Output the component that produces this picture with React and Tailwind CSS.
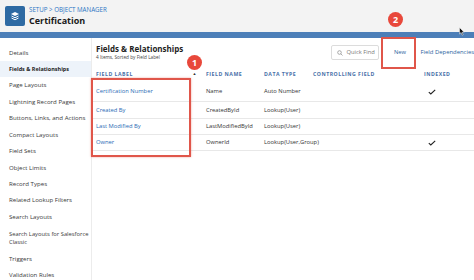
import React from 'react';

const sideItems = [
  'Details',
  'Fields & Relationships',
  'Page Layouts',
  'Lightning Record Pages',
  'Buttons, Links, and Actions',
  'Compact Layouts',
  'Field Sets',
  'Object Limits',
  'Record Types',
  'Related Lookup Filters',
  'Search Layouts',
  'Search Layouts for Salesforce Classic',
  'Triggers',
  'Validation Rules',
];

const rows = [
  { label: 'Certification Number', name: 'Name', type: 'Auto Number', indexed: true, h: 'h-[20px]' },
  { label: 'Created By', name: 'CreatedById', type: 'Lookup(User)', indexed: false, h: 'h-[17px]' },
  { label: 'Last Modified By', name: 'LastModifiedById', type: 'Lookup(User)', indexed: false, h: 'h-[16px]' },
  { label: 'Owner', name: 'OwnerId', type: 'Lookup(User,Group)', indexed: true, h: 'h-[16px]' },
];

const Badge = ({ n, className }) => (
  <div className={`absolute w-[15px] h-[15px] rounded-full bg-[#e8483b] text-white text-[9px] font-bold flex items-center justify-center ${className}`}>
    {n}
  </div>
);

const Check = () => (
  <svg width="8" height="6" viewBox="0 0 8 6">
    <path d="M0.8 3.2 L2.8 5 L7.2 0.8" fill="none" stroke="#222" strokeWidth="1.1" />
  </svg>
);

const App = () => {
  return (
    <div className="relative w-[474px] h-[280px] overflow-hidden bg-white" style={{ fontFamily: '"Open Sans", Lato, sans-serif' }}>
      {/* header */}
      <div className="h-[32px] bg-[#f3f3f3] flex items-center pl-[5px] gap-[4px]">
        <div className="w-[20px] h-[20px] rounded-[2px] bg-[#2e6aa3] flex items-center justify-center">
          <svg width="10" height="10" viewBox="0 0 10 10">
            <path d="M5 1 L9 3 L5 5 L1 3 Z" fill="#fff" />
            <path d="M1.5 5 L5 6.8 L8.5 5" fill="none" stroke="#fff" strokeWidth="1" />
            <path d="M1.5 7 L5 8.8 L8.5 7" fill="none" stroke="#fff" strokeWidth="1" />
          </svg>
        </div>
        <div className="flex flex-col leading-none">
          <div className="text-[6.2px] text-[#2b74c4]">SETUP &gt; OBJECT MANAGER</div>
          <div className="text-[9px] font-bold text-[#1a1a1a] mt-[2px]">Certification</div>
        </div>
      </div>
      <div className="h-[6px] bg-[#4d7fb8]" />

      <div className="flex h-[242px]">
        {/* sidebar */}
        <div className="w-[92px] shrink-0 border-r border-[#ececec] pt-[8px] flex flex-col">
          {sideItems.map((s, i) => (
            <div
              key={s}
              className={`shrink-0 pl-[9px] leading-[8.5px] flex items-center ${
                i === 0 ? 'h-[15px]' : i === 11 ? 'h-[25.5px]' : 'h-[16.44px]'
              } ${i === 1 ? 'bg-[#edf3fa] font-bold text-[#1c1c1c] text-[5.5px]' : 'text-[#3a3a3a] text-[6.1px]'}`}
            >
              {i === 11 ? (
                <span className="whitespace-nowrap text-[5.8px]">
                  Search Layouts for Salesforce
                  <br />
                  Classic
                </span>
              ) : (
                s
              )}
            </div>
          ))}
        </div>

        {/* main */}
        <div className="flex-1 relative">
          <div className="flex items-start justify-between pt-[5px]">
            <div className="pl-[4px]">
              <div className="text-[8px] font-bold text-[#1e1e1e] leading-[11px]">Fields &amp; Relationships</div>
              <div className="text-[4.7px] text-[#444] leading-[6px]">4 Items, Sorted by Field Label</div>
            </div>
            <div className="flex items-center pt-[2px]">
              <div className="w-[48px] h-[15px] border border-[#dcdcdc] rounded-[2px] flex items-center pl-[5px] gap-[3px] text-[5.8px] text-[#777]">
                <svg width="6" height="6" viewBox="0 0 6 6">
                  <circle cx="2.5" cy="2.5" r="1.8" fill="none" stroke="#888" strokeWidth="0.7" />
                  <path d="M3.8 3.8 L5.5 5.5" stroke="#888" strokeWidth="0.7" />
                </svg>
                Quick Find
              </div>
              <div className="w-[35px] h-[15px] ml-[3px] flex items-center justify-center text-[5.8px] text-[#2b5f9e]">New</div>
              <div className="ml-[3px] text-[5.9px] text-[#2b5f9e] whitespace-nowrap">Field Dependencies</div>
            </div>
          </div>

          {/* table */}
          <div className="mt-[8px] text-[5.8px]">
            <div className="flex h-[14px] items-center text-[#4970a8] font-bold tracking-[0.5px] text-[5.2px]">
              <div className="w-[114px] pl-[4px] flex justify-between pr-[9px]">
                <span>FIELD LABEL</span>
                <span className="text-[#333] text-[4px]">▲</span>
              </div>
              <div className="w-[58px]">FIELD NAME</div>
              <div className="w-[49px]">DATA TYPE</div>
              <div className="w-[111px]">CONTROLLING FIELD</div>
              <div>INDEXED</div>
            </div>
            {rows.map((r) => (
              <div key={r.label} className={`flex items-center border-b border-[#e8e8e8] text-[#333] ${r.h}`}>
                <div className="w-[114px] pl-[4px] text-[#2a6bb5]">{r.label}</div>
                <div className="w-[58px]">{r.name}</div>
                <div className="w-[49px] whitespace-nowrap">{r.type}</div>
                <div className="w-[111px]" />
                <div className="pl-[4px]">{r.indexed && <Check />}</div>
              </div>
            ))}
          </div>

          {/* annotation box 1 */}
          <div className="absolute left-[-1px] top-[40px] w-[100px] h-[79px] border-[2px] border-[#e0564a] shadow-[0_0_2px_rgba(224,86,74,0.5)]" />
          <Badge n="1" className="left-[95px] top-[17px]" />
        </div>
      </div>

      {/* annotation box 2 */}
      <div className="absolute left-[381px] top-[37px] w-[35px] h-[32px] border-[2px] border-[#e0564a]" />
      <Badge n="2" className="left-[388px] top-[12px]" />

      {/* cursor */}
      <svg className="absolute left-[459px] top-[27px]" width="6" height="9" viewBox="0 0 6 9">
        <path d="M0.5 0.5 L0.5 7 L2 5.6 L3.2 8.2 L4.2 7.8 L3 5.2 L5.2 5.2 Z" fill="#111" stroke="#fff" strokeWidth="0.5" />
      </svg>
    </div>
  );
};

export default App;
